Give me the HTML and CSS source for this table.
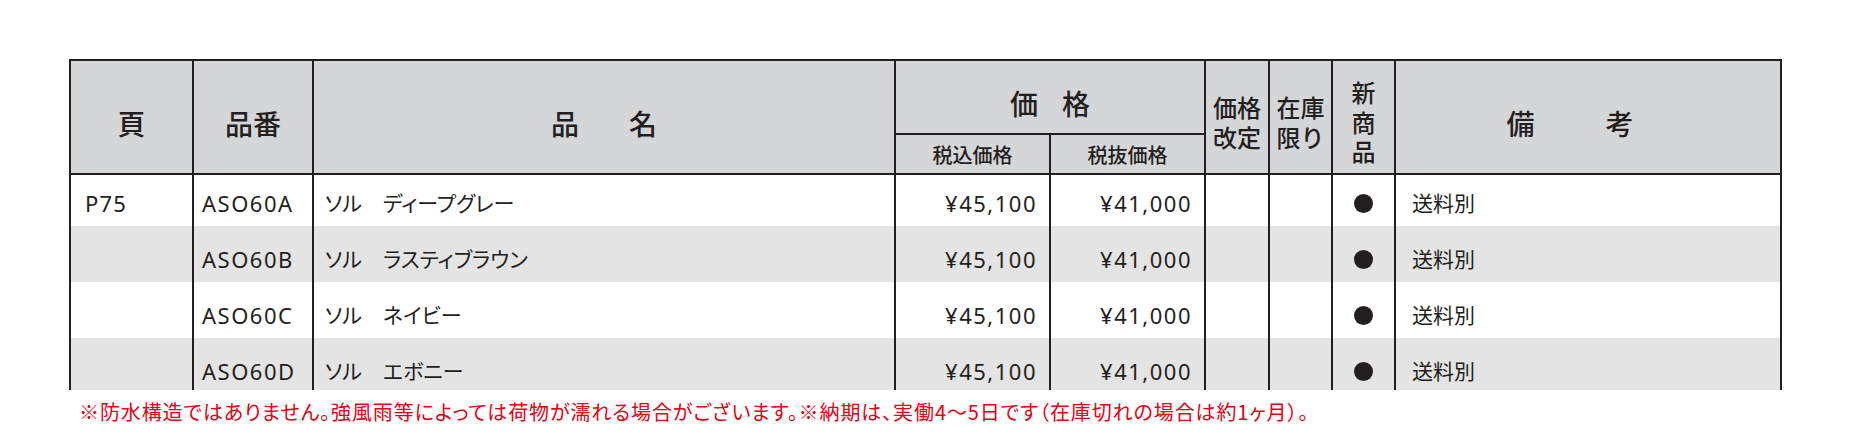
FILE: index.html
```html
<!DOCTYPE html>
<html lang="ja">
<head>
<meta charset="utf-8">
<title>価格表</title>
<link rel="stylesheet" href="styles.css">
</head>
<body>
<div class="sheet">
  <div class="clip">
    <div class="grid">
      <div class="h hs">頁</div>
      <div class="h hs">品番</div>
      <div class="h hs spread name-head"><span>品</span><span>名</span></div>
      <div class="h price-head spread"><span>価</span><span>格</span></div>
      <div class="h hs stack"><span>価格</span><span>改定</span></div>
      <div class="h hs stack"><span>在庫</span><span>限り</span></div>
      <div class="h hs stack3"><span>新</span><span>商</span><span>品</span></div>
      <div class="h hs spread memo-head"><span>備</span><span>考</span></div>
      <div class="h sub c4">税込価格</div>
      <div class="h sub c5">税抜価格</div>

      <div class="row first">
        <div class="c page">P75</div>
        <div class="c code">ASO60A</div>
        <div class="c name">ソル　ディープグレー</div>
        <div class="c num">¥45,100</div>
        <div class="c num">¥41,000</div>
        <div class="c"></div>
        <div class="c"></div>
        <div class="c dot"><span class="mark"></span></div>
        <div class="c memo">送料別</div>
      </div>
      <div class="row alt">
        <div class="c page"></div>
        <div class="c code">ASO60B</div>
        <div class="c name">ソル　ラスティブラウン</div>
        <div class="c num">¥45,100</div>
        <div class="c num">¥41,000</div>
        <div class="c"></div>
        <div class="c"></div>
        <div class="c dot"><span class="mark"></span></div>
        <div class="c memo">送料別</div>
      </div>
      <div class="row">
        <div class="c page"></div>
        <div class="c code">ASO60C</div>
        <div class="c name">ソル　ネイビー</div>
        <div class="c num">¥45,100</div>
        <div class="c num">¥41,000</div>
        <div class="c"></div>
        <div class="c"></div>
        <div class="c dot"><span class="mark"></span></div>
        <div class="c memo">送料別</div>
      </div>
      <div class="row alt">
        <div class="c page"></div>
        <div class="c code">ASO60D</div>
        <div class="c name">ソル　エボニー</div>
        <div class="c num">¥45,100</div>
        <div class="c num">¥41,000</div>
        <div class="c"></div>
        <div class="c"></div>
        <div class="c dot"><span class="mark"></span></div>
        <div class="c memo">送料別</div>
      </div>
    </div>
  </div>
  <p class="note">※防水構造ではありません。強風雨等によっては荷物が濡れる場合がございます。※納期は、実働4〜5日です（在庫切れの場合は約1ヶ月）。</p>
</div>
</body>
</html>
```

FILE: styles.css
```css
html, body {
  margin: 0;
  padding: 0;
  background: #ffffff;
}

body {
  color: #231f20;
  font-family: "Noto Sans", "Noto Sans CJK JP", sans-serif;
}

.sheet {
  padding: 59px 0 0 69px;
}

.clip {
  width: 1713px;
  height: 331px;
  overflow: hidden;
}

.grid {
  display: grid;
  grid-template-columns: 123px 120px 582px 155px 155px 64px 63px 63px 386px;
  grid-template-rows: 74px 40px 51px 56px 56px 56px;
  border-left: 2px solid #231f20;
  border-top: 2px solid #231f20;
  width: 1711px;
}

.h {
  box-sizing: border-box;
  background: #d5d6d8;
  border-right: 2px solid #231f20;
  border-bottom: 2px solid #231f20;
  display: flex;
  align-items: center;
  justify-content: center;
  font-family: "Noto Sans CJK JP", sans-serif;
  font-weight: 500;
  color: #231f20;
  text-align: center;
}

.hs {
  grid-row: 1 / span 2;
  font-size: 28px;
  line-height: 32px;
  padding-top: 11px;
}

.name-head {
  gap: 50px;
}

.memo-head {
  gap: 71px;
  padding-right: 36px;
}

.price-head {
  grid-column: 4 / span 2;
  grid-row: 1;
  font-size: 28px;
  line-height: 32px;
  padding-top: 12px;
  gap: 24px;
}

.sub {
  grid-row: 2;
  font-size: 20px;
  line-height: 24px;
  padding-top: 2px;
}

.c4 { grid-column: 4; }
.c5 { grid-column: 5; }

.stack {
  flex-direction: column;
  font-size: 24px;
  line-height: 30px;
  padding-top: 9px;
}

.stack3 {
  flex-direction: column;
  font-size: 24px;
  line-height: 29.5px;
  padding-top: 9px;
}

.stack span {
  display: block;
  height: 30px;
}

.stack3 span {
  display: block;
  height: 29.5px;
}

.row {
  display: contents;
}

.c {
  box-sizing: border-box;
  border-right: 2px solid #231f20;
  background: #ffffff;
  display: flex;
  align-items: center;
  font-size: 21px;
  line-height: 28px;
  padding-top: 10px;
  font-feature-settings: "palt";
  white-space: nowrap;
}

.row.first .c {
  padding-top: 5px;
}

.row.alt .c {
  background: #e4e4e4;
}

.page {
  padding-left: 14px;
  font-size: 22px;
  letter-spacing: 1.2px;
}

.code {
  padding-left: 8px;
  font-size: 22px;
  letter-spacing: 1.5px;
}

.name {
  padding-left: 11px;
}

.num {
  justify-content: flex-end;
  padding-right: 12px;
  font-size: 22px;
  letter-spacing: 1.5px;
}

.dot {
  justify-content: center;
}

.mark {
  display: block;
  width: 19px;
  height: 19px;
  border-radius: 50%;
  background: #231f20;
}

.memo {
  padding-left: 16px;
}

.note {
  margin: 8px 0 0 10px;
  font-family: "Noto Sans CJK JP", sans-serif;
  font-size: 20px;
  line-height: 28px;
  letter-spacing: 0.9px;
  color: #e60012;
  font-feature-settings: "palt";
  white-space: nowrap;
}
```
